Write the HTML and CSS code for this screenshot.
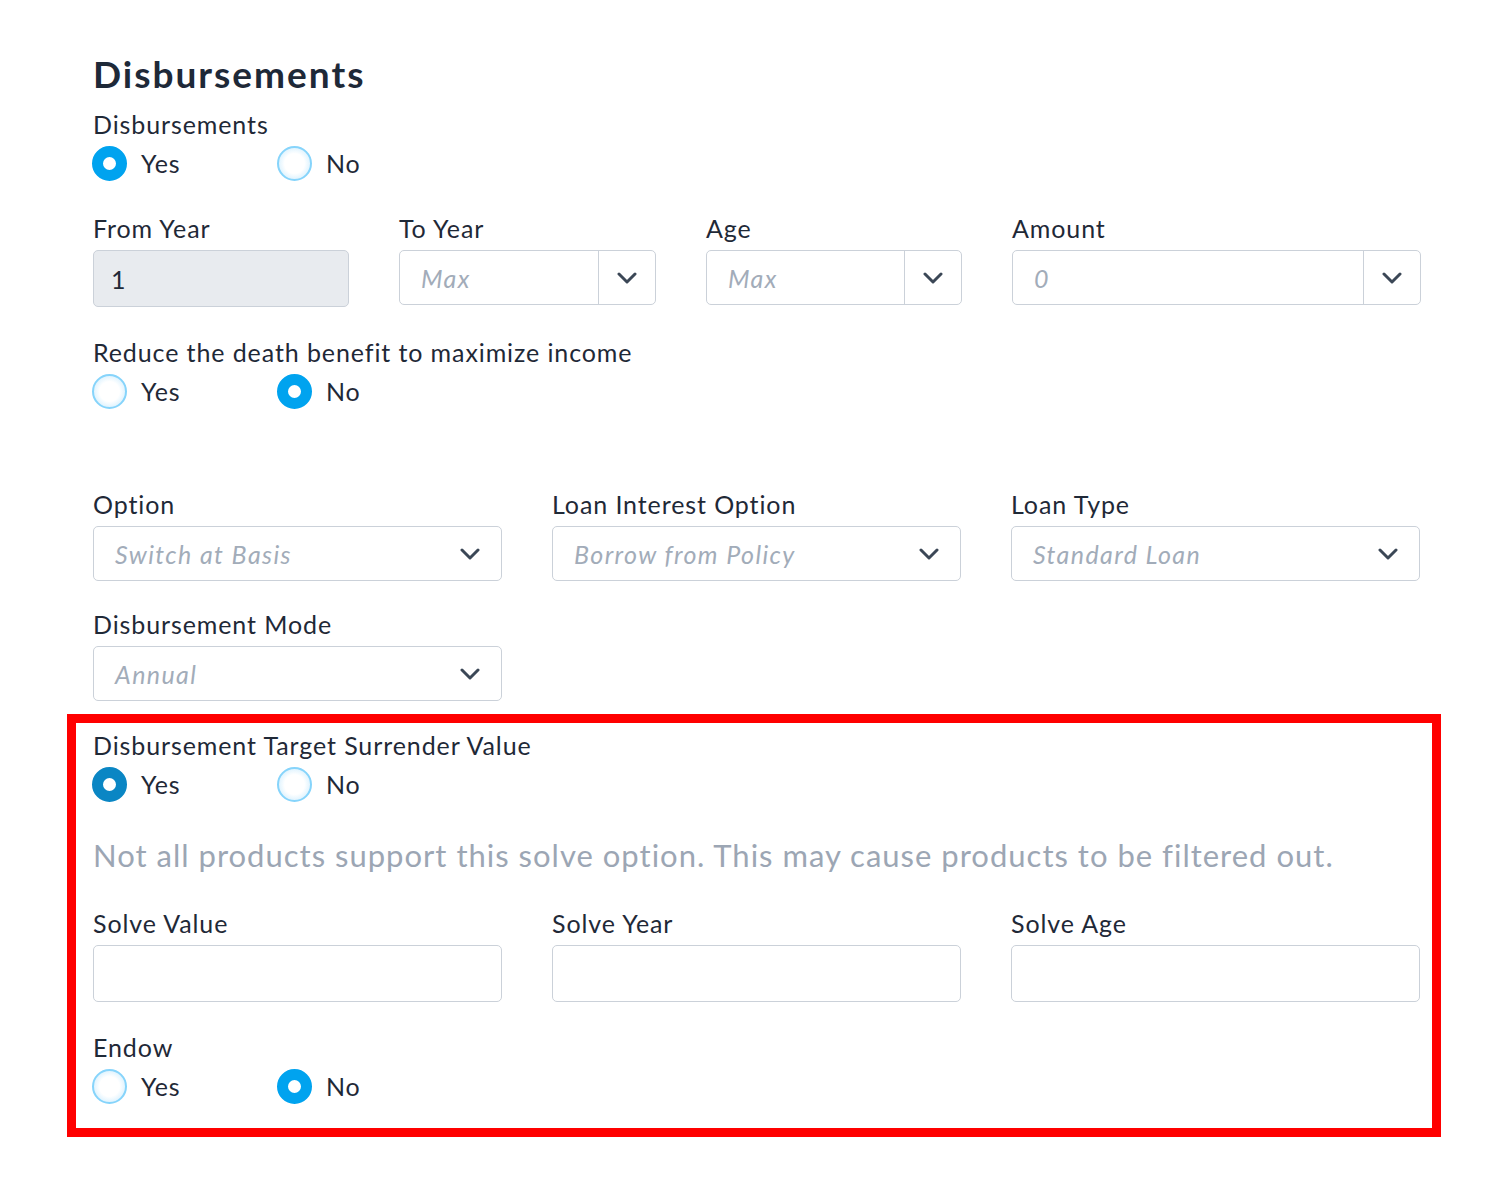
FILE: index.html
```html
<!DOCTYPE html>
<html lang="en">
<head>
<meta charset="utf-8">
<title>Disbursements</title>
<link rel="stylesheet" href="styles.css">
</head>
<body>
<main class="page">
  <h1 class="title">Disbursements</h1>

  <div class="field">
    <div class="label">Disbursements</div>
    <div class="radios">
      <label class="radio"><span class="dot checked"></span><span>Yes</span></label>
      <label class="radio"><span class="dot"></span><span>No</span></label>
    </div>
  </div>

  <div class="grid4 row-years">
    <div class="field">
      <div class="label">From Year</div>
      <div class="input disabled"><span class="value">1</span></div>
    </div>
    <div class="field">
      <div class="label">To Year</div>
      <div class="input group">
        <span class="ph">Max</span>
        <span class="btn"><svg class="chev" viewBox="0 0 20 12"><path d="M2 2 L10 10 L18 2"/></svg></span>
      </div>
    </div>
    <div class="field">
      <div class="label">Age</div>
      <div class="input group">
        <span class="ph">Max</span>
        <span class="btn"><svg class="chev" viewBox="0 0 20 12"><path d="M2 2 L10 10 L18 2"/></svg></span>
      </div>
    </div>
    <div class="field">
      <div class="label">Amount</div>
      <div class="input group">
        <span class="ph">0</span>
        <span class="btn"><svg class="chev" viewBox="0 0 20 12"><path d="M2 2 L10 10 L18 2"/></svg></span>
      </div>
    </div>
  </div>

  <div class="field row-reduce">
    <div class="label">Reduce the death benefit to maximize income</div>
    <div class="radios">
      <label class="radio"><span class="dot"></span><span>Yes</span></label>
      <label class="radio"><span class="dot checked"></span><span>No</span></label>
    </div>
  </div>

  <div class="grid3 row-option">
    <div class="field">
      <div class="label">Option</div>
      <div class="input select"><span class="ph">Switch at Basis</span><svg class="chev" viewBox="0 0 20 12"><path d="M2 2 L10 10 L18 2"/></svg></div>
    </div>
    <div class="field">
      <div class="label">Loan Interest Option</div>
      <div class="input select"><span class="ph">Borrow from Policy</span><svg class="chev" viewBox="0 0 20 12"><path d="M2 2 L10 10 L18 2"/></svg></div>
    </div>
    <div class="field">
      <div class="label">Loan Type</div>
      <div class="input select"><span class="ph">Standard Loan</span><svg class="chev" viewBox="0 0 20 12"><path d="M2 2 L10 10 L18 2"/></svg></div>
    </div>
  </div>

  <div class="grid3 row-mode">
    <div class="field">
      <div class="label">Disbursement Mode</div>
      <div class="input select"><span class="ph">Annual</span><svg class="chev" viewBox="0 0 20 12"><path d="M2 2 L10 10 L18 2"/></svg></div>
    </div>
  </div>

  <section class="highlight">
    <div class="field">
      <div class="label">Disbursement Target Surrender Value</div>
      <div class="radios">
        <label class="radio"><span class="dot checked focus"></span><span>Yes</span></label>
        <label class="radio"><span class="dot"></span><span>No</span></label>
      </div>
    </div>

    <p class="note">Not all products support this solve option. This may cause products to be filtered out.</p>

    <div class="grid3 row-solve">
      <div class="field">
        <div class="label">Solve Value</div>
        <div class="input tall"></div>
      </div>
      <div class="field">
        <div class="label">Solve Year</div>
        <div class="input tall"></div>
      </div>
      <div class="field">
        <div class="label">Solve Age</div>
        <div class="input tall"></div>
      </div>
    </div>

    <div class="field row-endow">
      <div class="label">Endow</div>
      <div class="radios">
        <label class="radio"><span class="dot"></span><span>Yes</span></label>
        <label class="radio"><span class="dot checked"></span><span>No</span></label>
      </div>
    </div>
  </section>
</main>
</body>
</html>
```
FILE: styles.css
```css
* { box-sizing: border-box; }
html, body { margin: 0; padding: 0; background: #fff; }
body {
  font-family: Lato, "Open Sans", sans-serif;
  color: #1f2937;
}
.page {
  padding: 52px 0 0 93px;
  width: 1501px;
}
.title {
  margin: 0 0 13px;
  font-size: 37px;
  line-height: 44px;
  font-weight: 700;
  letter-spacing: 2px;
  color: #1e2938;
}
.label {
  font-size: 25px;
  line-height: 30px;
  letter-spacing: 0.9px;
  color: #1f2937;
}
.radios {
  display: flex;
  margin-top: 5px;
  height: 38px;
  align-items: center;
}
.radio {
  display: flex;
  align-items: center;
  width: 185px;
  font-size: 25px;
  letter-spacing: 0.9px;
  color: #1f2937;
}
.dot {
  width: 35px;
  height: 35px;
  border-radius: 50%;
  border: 2px solid #86d4fb;
  background: radial-gradient(circle, #ffffff 45%, #dcf2fe 75%, #ace1fb 100%);
  margin-right: 14px;
  flex: none;
  margin-left: -1px;
}
.dot.checked {
  border: 11px solid #00a3ef;
  background: #fff;
}
.dot.checked.focus {
  border-color: #0a86c4;
}
.grid4 {
  display: grid;
  grid-template-columns: 256px 257px 256px 409px;
  column-gap: 50px;
}
.grid3 {
  display: grid;
  grid-template-columns: 409px 409px 409px;
  column-gap: 50px;
}
.row-years { margin-top: 31px; }
.row-reduce { margin-top: 30px; }
.row-option { margin-top: 79px; }
.row-mode { margin-top: 28px; }
.input {
  margin-top: 7px;
  height: 55px;
  border: 1.5px solid #cbd1d9;
  border-radius: 5px;
  display: flex;
  align-items: center;
  background: #fff;
}
.input.disabled {
  background: #e8ebef;
  padding-left: 17px;
  height: 57px;
}
.value {
  font-size: 25px;
  color: #1f2937;
}
.ph {
  font-style: italic;
  font-size: 25px;
  letter-spacing: 1.4px;
  color: #a2acb9;
  padding-left: 21px;
  flex: 1;
}
.group .btn {
  width: 57px;
  height: 100%;
  border-left: 1.5px solid #cbd1d9;
  display: flex;
  align-items: center;
  justify-content: center;
}
.chev {
  width: 20px;
  height: 12px;
  fill: none;
  stroke: #3b4756;
  stroke-width: 3;
  stroke-linecap: round;
  stroke-linejoin: round;
}
.select .chev {
  margin-right: 21px;
}
.highlight {
  margin: 13px 0 0 -26px;
  width: 1374px;
  border: 9px solid #ff0000;
  padding: 7px 12px 23px 17px;
}
.note {
  margin: 32px 0 0;
  font-size: 31px;
  line-height: 40px;
  letter-spacing: 1px;
  color: #9ca6b4;
}
.row-solve { margin-top: 33px; }
.input.tall { height: 57px; margin-top: 7px; }
.row-endow { margin-top: 30px; }
```
